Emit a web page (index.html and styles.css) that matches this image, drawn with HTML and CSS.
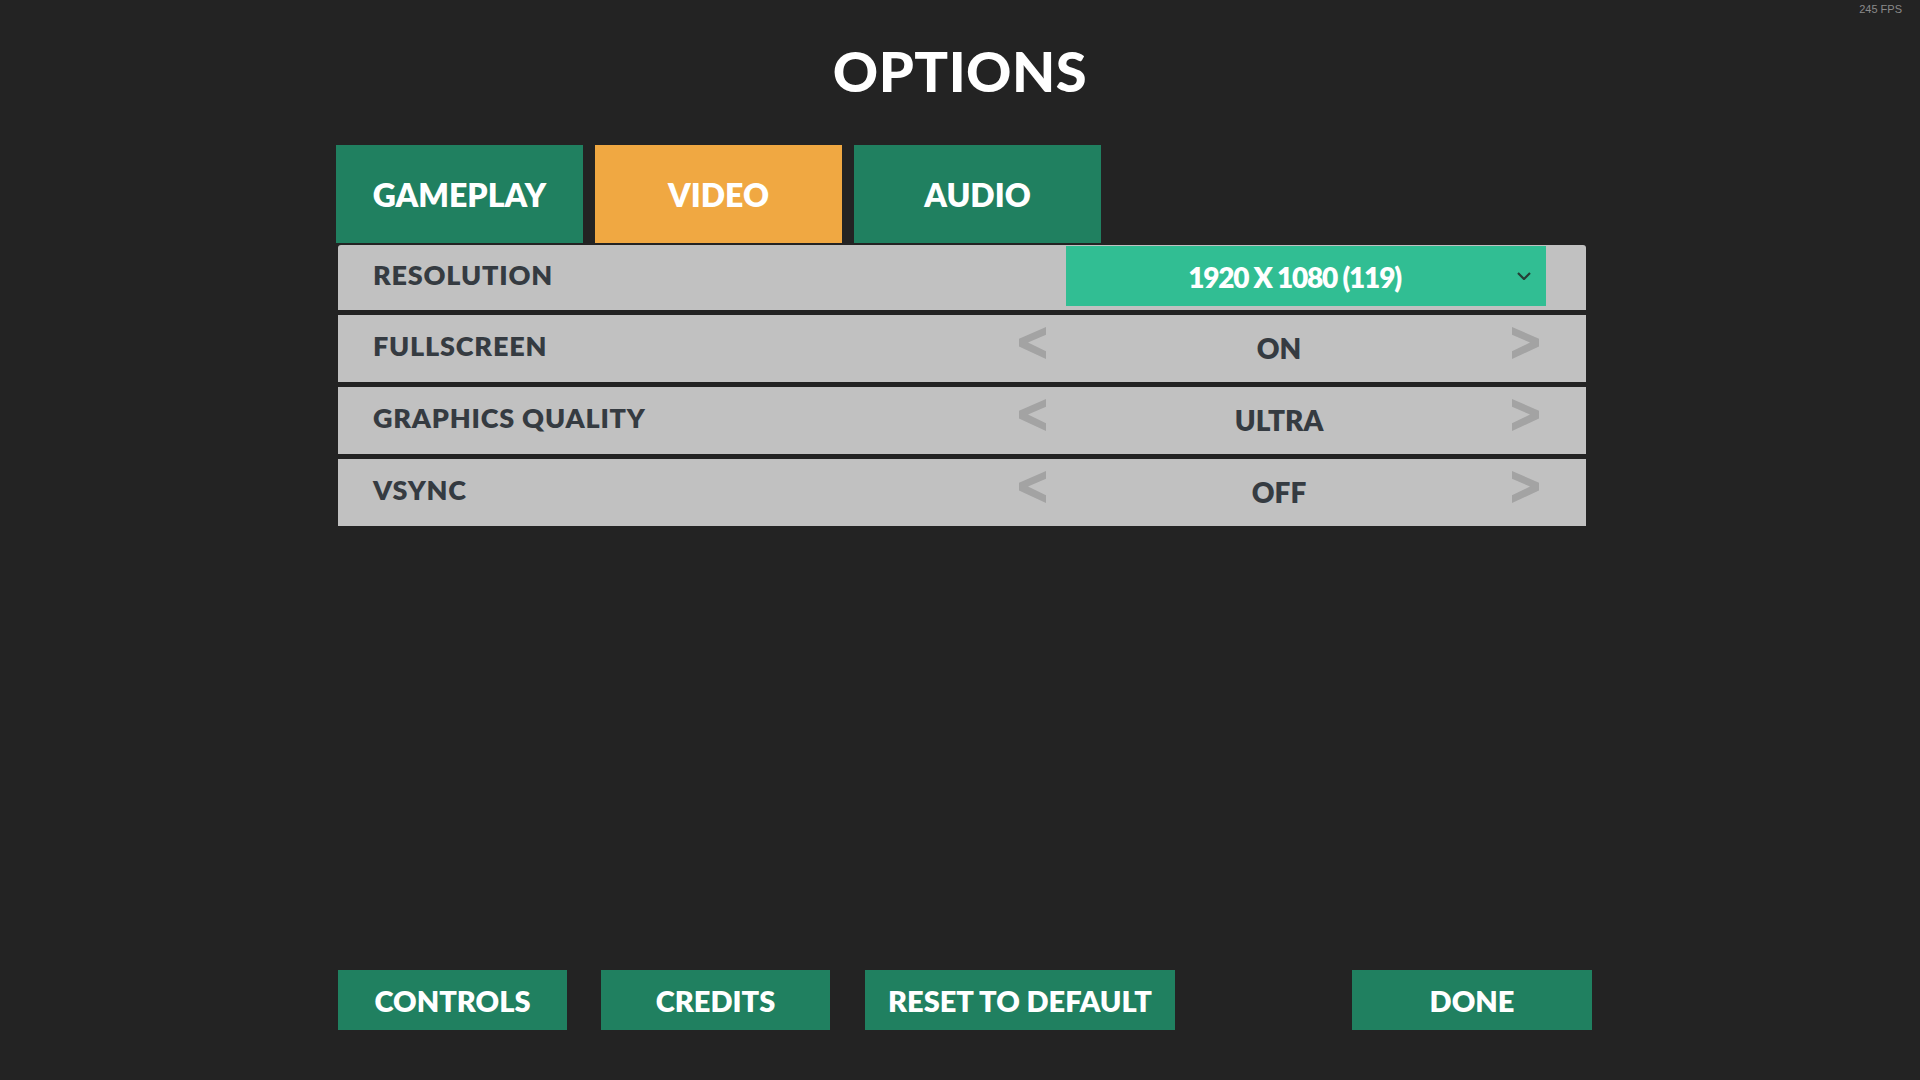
FILE: index.html
```html
<!DOCTYPE html>
<html lang="en">
<head>
<meta charset="utf-8">
<title>Options</title>
<link rel="stylesheet" href="styles.css">
</head>
<body>
<div class="fps">245 FPS</div>
<div class="page">
  <h1 class="title">OPTIONS</h1>
  <div class="panel">
    <div class="tabs">
      <div class="tab">GAMEPLAY</div>
      <div class="tab tab-active">VIDEO</div>
      <div class="tab">AUDIO</div>
    </div>
    <div class="rows">
      <div class="row row-first">
        <div class="label">RESOLUTION</div>
        <div class="dropdown">
          <span class="dropdown-text">1920 X 1080 (119)</span>
          <svg class="chevron" width="14" height="8" viewBox="0 0 14 8"><polyline points="1,1 7,7 13,1" fill="none" stroke="#263d35" stroke-width="2.2"/></svg>
        </div>
      </div>
      <div class="row">
        <div class="label">FULLSCREEN</div>
        <div class="selector">
          <svg class="arrow" width="27" height="32" viewBox="0 0 27 32"><polygon points="27,0 27,7.7 9,15.6 27,24.3 27,32 0,19.5 0,11.8" fill="#a3a3a3"/></svg>
          <div class="value">ON</div>
          <svg class="arrow" width="27" height="32" viewBox="0 0 27 32"><polygon points="0,0 0,7.7 18,15.6 0,24.3 0,32 27,19.5 27,11.8" fill="#a3a3a3"/></svg>
        </div>
      </div>
      <div class="row">
        <div class="label">GRAPHICS QUALITY</div>
        <div class="selector">
          <svg class="arrow" width="27" height="32" viewBox="0 0 27 32"><polygon points="27,0 27,7.7 9,15.6 27,24.3 27,32 0,19.5 0,11.8" fill="#a3a3a3"/></svg>
          <div class="value">ULTRA</div>
          <svg class="arrow" width="27" height="32" viewBox="0 0 27 32"><polygon points="0,0 0,7.7 18,15.6 0,24.3 0,32 27,19.5 27,11.8" fill="#a3a3a3"/></svg>
        </div>
      </div>
      <div class="row">
        <div class="label">VSYNC</div>
        <div class="selector">
          <svg class="arrow" width="27" height="32" viewBox="0 0 27 32"><polygon points="27,0 27,7.7 9,15.6 27,24.3 27,32 0,19.5 0,11.8" fill="#a3a3a3"/></svg>
          <div class="value">OFF</div>
          <svg class="arrow" width="27" height="32" viewBox="0 0 27 32"><polygon points="0,0 0,7.7 18,15.6 0,24.3 0,32 27,19.5 27,11.8" fill="#a3a3a3"/></svg>
        </div>
      </div>
    </div>
  </div>
  <div class="spacer"></div>
  <div class="footer">
    <div class="btn btn-controls">CONTROLS</div>
    <div class="btn btn-credits">CREDITS</div>
    <div class="btn btn-reset">RESET TO DEFAULT</div>
    <div class="btn btn-done">DONE</div>
  </div>
</div>
</body>
</html>
```
FILE: styles.css
```css
html, body {
  margin: 0;
  padding: 0;
}
body {
  background: #232323;
  width: 1920px;
  height: 1080px;
  overflow: hidden;
  font-family: "Lato", "Liberation Sans", sans-serif;
  position: relative;
}
.fps {
  position: absolute;
  top: 3px;
  right: 18px;
  font-family: "Liberation Sans", Arial, sans-serif;
  font-size: 11px;
  color: #8a8a8a;
}
.page {
  height: 1080px;
  display: flex;
  flex-direction: column;
}
.title {
  margin: 43px 0 0 0;
  font-size: 56px;
  line-height: 56px;
  font-weight: 900;
  color: #ffffff;
  text-align: center;
  letter-spacing: 0.5px;
}
.panel {
  margin: 46px 0 0 338px;
  width: 1248px;
}
.tabs {
  display: flex;
  gap: 12px;
  margin-left: -2px;
}
.tab {
  width: 247px;
  height: 98px;
  background: #208060;
  color: #ffffff;
  font-size: 32px;
  font-weight: 800;
  display: flex;
  align-items: center;
  justify-content: center;
}
.tab-active {
  background: #f0a842;
}
.rows {
  margin-top: 2px;
  display: flex;
  flex-direction: column;
  gap: 5px;
}
.row {
  height: 67px;
  background: #c1c1c1;
  display: flex;
  align-items: center;
}
.row-first {
  height: 65px;
  align-items: flex-start;
  border-top-left-radius: 3px;
  border-top-right-radius: 3px;
}
.label {
  flex: 1;
  padding-left: 35px;
  padding-bottom: 6px;
  font-size: 27px;
  font-weight: 800;
  letter-spacing: 0.8px;
  color: #353b41;
}
.row-first .label {
  align-self: center;
}
.dropdown {
  width: 480px;
  height: 60px;
  margin: 1px 40px 0 0;
  background: #31be93;
  display: flex;
  align-items: center;
  padding-left: 6px;
  box-sizing: border-box;
}
.dropdown-text {
  flex: 1;
  text-align: center;
  color: #ffffff;
  font-size: 28px;
  font-weight: 800;
  letter-spacing: -1.2px;
  padding-top: 2px;
}
.chevron {
  margin-right: 15px;
}
.selector {
  width: 520px;
  margin-right: 47px;
  display: flex;
  align-items: center;
}
.arrow {
  margin-bottom: 11px;
}
.value {
  flex: 1;
  text-align: center;
  font-size: 28px;
  font-weight: 800;
  color: #353b41;
  padding-bottom: 1px;
}
.spacer {
  flex: 1;
}
.footer {
  margin: 0 0 50px 338px;
  width: 1254px;
  display: flex;
}
.btn {
  height: 60px;
  background: #208060;
  color: #ffffff;
  font-size: 29px;
  font-weight: 800;
  display: flex;
  align-items: center;
  justify-content: center;
}
.btn-controls { width: 229px; }
.btn-credits { width: 229px; margin-left: 34px; }
.btn-reset { width: 310px; margin-left: 35px; }
.btn-done { width: 240px; margin-left: auto; }
```
